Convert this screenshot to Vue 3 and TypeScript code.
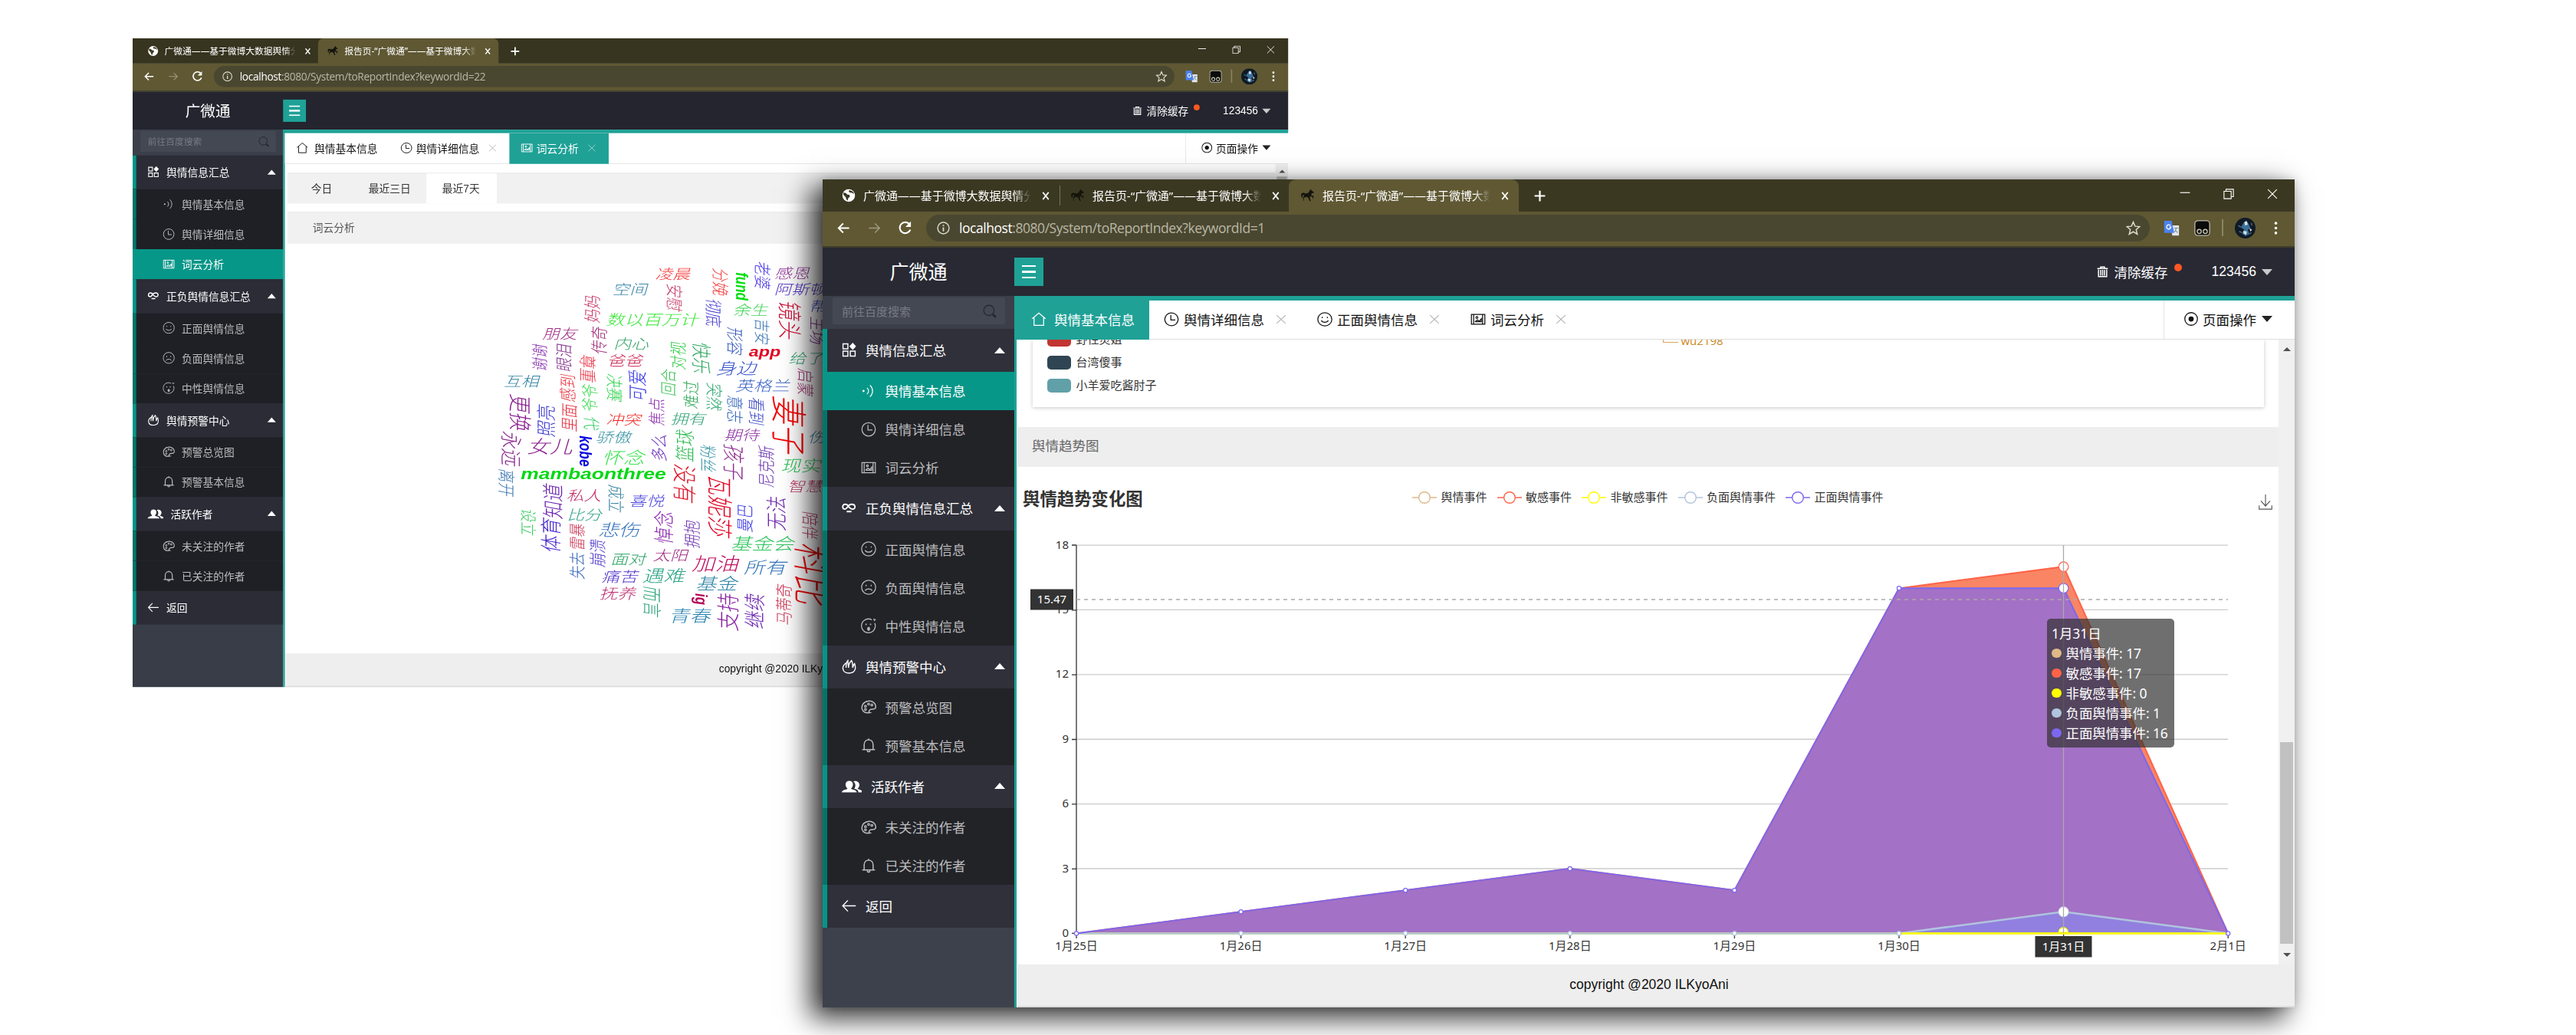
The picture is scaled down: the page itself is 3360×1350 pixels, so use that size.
<script setup lang="ts">
import { h, type FunctionalComponent } from 'vue'

const icons: Record<string, string> = {
  globe: '<circle cx="12" cy="12" r="11" fill="#fff" stroke="none"/><path d="M3 7c3 0 5 1 6 3 2 1 5 0 5 3s-3 2-3 5l-1 3c-3-2-2-5-4-7S2 12 3 7zM13 3c-2 2 0 4 3 4s3 2 5 2c0-3-4-6-8-6z" fill="#3b3822" stroke="none"/>',
  horse: '<path d="M0 10c2-3 4-3 6-2 3 1 5 0 7-1l3-5 1-1 1 2 4 3v2l-3-.5-1.500 4 4.500 1-1 5-1-.5v-3l-4-.5-1 1 2 7h-2l-3-6.500-5-.5-2 2-.5 5H4l-.5-6 2-4-.5-1-2 1-1 4H1z" fill="#15140d" stroke="none"/>',
  home: '<path d="M1.500 11L12 1.500 22.500 11M4.500 9v13h15V9"/>',
  clock: '<circle cx="12" cy="12" r="10.500"/><path d="M11 5v8h7"/>',
  image: '<path d="M5 4h14v16H5zM5 4H1.500v16H5M19 4h3.500v16H19"/><circle cx="10" cy="9" r="1.500"/><path d="M7 16l4-3 3 2 3-4v5H7"/>',
  smile: '<circle cx="12" cy="12" r="11"/><path d="M8 8v2M16 8v2M6.500 14c2 4 9 4 11 0"/>',
  sad: '<circle cx="12" cy="12" r="11"/><path d="M8 8v2.500M16 8v2.500M6.500 17.500c2-4 9-4 11 0"/>',
  wow: '<path d="M17 3A10.800 10.800 0 1 0 21.500 8M20 1l1 3 2-2"/><path d="M8 9v2M15 9v2" stroke-width="2"/><ellipse cx="12" cy="17" rx="1.500" ry="2.500" fill="currentColor"/>',
  signal: '<circle cx="4" cy="12" r="1.700" fill="currentColor" stroke="none"/><path d="M9.500 7c3 3 3 7 0 10M14 3c5.500 5 5.500 13 0 18"/>',
  apps: '<path d="M2 2h8v8H2zM2 14h8v8H2zM14 14h8v8h-8z" stroke-width="1.800"/><path d="M18 0l5.500 6L18 12l-5.500-6z" fill="currentColor" stroke="none"/>',
  link: '<path d="M12 11c-2-4-4-5-6.500-5A4 4 0 0 0 5.500 14C9 14 10 6 16 6c8 0 7 9 1 8-2 0-3-1-5-3M8 18h8" stroke-width="2.300"/>',
  fire: '<path d="M7 6C3 9 1 12 2 16c1 9 18 9 20 0 1-3 0-6-1-9-2 2-2 4-3 7 0-5 0-9-2-12-3 3-5 7-5 12 0-4-1-7-1-12C7 5 7 9 7 14" stroke-width="1.800"/>',
  palette: '<path d="M14 21c-3-1-1-4 1-5 3-1 7 1 8-3C24 6 17 2 11 3 4 4 0 10 2 16c2 5 7 6 12 5z" stroke-width="1.800"/><circle cx="7" cy="11" r="1.500"/><circle cx="12" cy="7.500" r="1.500"/><circle cx="17" cy="9" r="1.500"/><circle cx="7" cy="16" r="1.500"/>',
  bell: '<path d="M2 19h20M5 19v-8c0-10 14-10 14 0v8M10 20c0 3 4 3 4 0M12 3V1.500" stroke-width="1.800"/>',
  users: '<path d="M0 22c0-4 5-4 7-6-4-5-3-13 2-13s6 8 2 13c2 2 7 2 7 6z" fill="currentColor" stroke="none"/><path d="M14 4c6-3 10 6 5 12 2 2 6 2 6 6h-5c0-4-2-5-5-6 2-4 2-8-1-12z" fill="currentColor" stroke="none"/>',
  back: '<path d="M23 12H2M10 3l-8.500 9 8.500 9" stroke-width="1.800"/>',
  left: '<path d="M22 12H3M11 3.500L2.500 12l8.500 8.500" stroke-width="2.600"/>',
  right: '<path d="M2 12h19M13 3.500l8.500 8.500-8.500 8.500" stroke-width="2"/>',
  reload: '<path d="M20.500 15.500A9.500 9.500 0 1 1 19 6" stroke-width="2.800"/><path d="M21.500 1v9.500H12z" fill="currentColor" stroke="none"/>',
  info: '<circle cx="12" cy="12" r="10.500" stroke-width="2"/><path d="M12 10.500V18M12 6v2.500" stroke-width="2.500"/>',
  close: '<path d="M3 2l18 20M21 2L3 22" stroke-width="4"/>',
  thin: '<path d="M2 2l20 20M22 2L2 22" stroke-width="1.900"/>',
  plus: '<path d="M12 1v22M1 12h22" stroke-width="3.500"/>',
  star: '<path d="M12 2l3 7 7.500.6-5.700 5 1.800 7.400L12 18l-6.600 4 1.800-7.400-5.700-5L9 9z" stroke-width="1.900"/>',
  search: '<circle cx="10.500" cy="10.500" r="9"/><path d="M17.500 17.500l5 5" stroke-width="3"/>',
  trash: '<path d="M1 5h22M8 5V2h8v3M3.500 7v15h17V7M8 8v12M12 8v12M16 8v12" stroke-width="2.400"/>',
  radio: '<circle cx="12" cy="12" r="11" stroke-width="1.700"/><circle cx="12" cy="12" r="4.500" fill="currentColor" stroke="none"/>',
  translate: '<path d="M11 8h12v15H13z" fill="#e4e6ea" stroke="none"/><path d="M1 1h11l4 18H1z" fill="#4c82ee" stroke="none"/><path d="M10.500 8.500A3.200 3.200 0 1 0 11 10.500H8.500" stroke="#fff"/><path d="M16 12h6M19 11v1c0 3-2 5-3 6M17 14l4 5" stroke="#78909c" stroke-width="1.200"/>',
  monkey: '<rect x="1" y="1" width="22" height="22" rx="4.500" fill="#0b0b0b" stroke="#b9b8a9"/><circle cx="7.500" cy="17" r="3" stroke="#c9c6b0"/><circle cx="16.500" cy="17" r="3" stroke="#c9c6b0"/>',
  avatar: '<circle cx="12" cy="12" r="12" fill="#101a24" stroke="none"/><path d="M10 6l3-3 3 4 2 5-3 2 2 5-5 2-4-3 3-4-4-3z" fill="#3a6f98" stroke="none"/><path d="M11 5l3-1 1 4-3 1zM10 15l4 1-1 4-3-2zM17 12l3 2-2 2z" fill="#d7dfe2" stroke="none"/><path d="M4 9l3 2M19 6l1 3M5 16l3 1M17 19l2-2" stroke="#48708d" stroke-width="1.200"/>',
  dots: '<circle cx="12" cy="3" r="2.500" fill="#fff" stroke="none"/><circle cx="12" cy="12" r="2.500" fill="#fff" stroke="none"/><circle cx="12" cy="21" r="2.500" fill="#fff" stroke="none"/>',
  min: '<path d="M1 9h22" stroke-width="2"/>',
  restore: '<path d="M1.500 6h16v16.500h-16zM6 6V1.500h16.500V18H17.500" stroke-width="1.900"/>',
  download: '<path d="M12 0v18M4 10l8 8 8-8M1 17v6h22v-6" stroke-width="1.500"/>',
}

const Icon: FunctionalComponent<{ n: string; s?: number; w?: number }> = (p) =>
  h('svg', {
    width: p.w ?? p.s ?? 18, height: p.s ?? 18, viewBox: '0 0 24 24', fill: 'none',
    stroke: 'currentColor', 'stroke-width': 1.5, innerHTML: icons[p.n],
    preserveAspectRatio: 'none', style: 'flex:none;display:block',
  })
Icon.props = ['n', 's', 'w']

const menu = [
  { icon: 'apps', text: '舆情信息汇总', items: [['signal', '舆情基本信息'], ['clock', '舆情详细信息'], ['image', '词云分析']] },
  { icon: 'link', text: '正负舆情信息汇总', items: [['smile', '正面舆情信息'], ['sad', '负面舆情信息'], ['wow', '中性舆情信息']] },
  { icon: 'fire', text: '舆情预警中心', items: [['palette', '预警总览图'], ['bell', '预警基本信息']] },
  { icon: 'users', text: '活跃作者', items: [['palette', '未关注的作者'], ['bell', '已关注的作者']] },
  { icon: 'back', text: '返回', items: [] },
]

const first = '广微通——基于微博大数据舆情分'
const report = '报告页-“广微通”——基于微博大数'
const windows = [
  {
    id: 'cloud', url: ':8080/System/toReportIndex?keywordId=22', active: '词云分析',
    browserTabs: [first, report],
    tabs: [['home', '舆情基本信息'], ['clock', '舆情详细信息'], ['image', '词云分析']],
  },
  {
    id: 'trend', url: ':8080/System/toReportIndex?keywordId=1', active: '舆情基本信息',
    browserTabs: [first, report, report],
    tabs: [['home', '舆情基本信息'], ['clock', '舆情详细信息'], ['smile', '正面舆情信息'], ['image', '词云分析']],
  },
]

// text, centre x, centre y, size, colour, rotation
type Word = [string, number, number, number, string, number]
const words: Word[] = [
  ['凌晨', 748, 82, 54, '#f63b3b', 0], ['空间', 580, 142, 54, '#3a86a8', 0], ['老婆', 1092, 88, 54, '#4a3ae8', 90],
  ['分娩', 928, 114, 54, '#f23c3c', 90], ['感恩', 1215, 78, 54, '#8f2f93', 0], ['阿斯顿', 1248, 142, 54, '#5434c4', 0],
  ['安慰', 748, 175, 54, '#c63e68', 90], ['妈妈', 428, 217, 54, '#c83468', -90], ['数以百万计', 668, 262, 57, '#3be83b', 0],
  ['彻底', 900, 235, 54, '#4036d0', 90], ['余生', 1052, 224, 54, '#44d45a', 0], ['镜头', 1200, 265, 76, '#d01438', 90],
  ['帮助', 1350, 208, 54, '#3444c0', 0], ['主场', 1310, 305, 54, '#7c2c94', 90], ['吉安', 1092, 308, 50, '#3674b4', 90],
  ['形容', 985, 345, 54, '#3458bc', 90], ['朋友', 305, 317, 54, '#a22c84', 0], ['传奇', 455, 340, 54, '#a22c78', -90],
  ['内心', 585, 355, 54, '#34a468', 0], ['谢谢', 222, 408, 52, '#8a32b4', -90], ['眼泪', 318, 408, 54, '#82308c', -90],
  ['尊重', 410, 452, 54, '#ec3446', 90], ['爸爸', 560, 422, 54, '#cc2452', 0], ['对视', 765, 400, 54, '#30cc48', -90],
  ['快乐', 855, 412, 62, '#2ca85c', 90], ['给了', 1270, 412, 54, '#2ca270', 0], ['启蒙', 1260, 507, 54, '#a23674', 90],
  ['身边', 998, 450, 62, '#3452cc', 0], ['可爱', 605, 517, 61, '#3636e8', -90], ['互相', 155, 503, 54, '#3484a4', 0],
  ['感到', 332, 527, 54, '#e83440', -90], ['爷爷', 418, 567, 54, '#40dc54', -90], ['决赛', 513, 528, 54, '#34d450', 90],
  ['回合', 727, 505, 52, '#38c050', -90], ['难过', 815, 553, 54, '#30a858', -90], ['突然', 903, 563, 54, '#30a874', 90],
  ['英格兰', 1100, 520, 56, '#3c64c8', 0], ['意志', 985, 612, 54, '#3464bc', 90], ['看到', 1070, 620, 54, '#3c48c8', 90],
  ['妻子', 1195, 678, 114, '#f40808', 90], ['更换', 145, 627, 72, '#8a1c90', 90], ['照亮', 248, 655, 62, '#3c38d4', -90],
  ['里面', 338, 643, 54, '#e43040', -90], ['代', 425, 667, 54, '#34cc60', 90], ['焦点', 680, 620, 54, '#8c30b0', -90],
  ['冲突', 555, 653, 54, '#f02828', 0], ['拥有', 808, 650, 54, '#30a474', 0], ['骄傲', 515, 720, 54, '#3a94a4', 0],
  ['期待', 1018, 712, 54, '#8c30a4', 0], ['粉丝', 880, 805, 54, '#3494a4', 90], ['多么', 690, 760, 54, '#6a34bc', -90],
  ['篮球', 790, 753, 62, '#30bc54', -90], ['女儿', 268, 757, 70, '#8c2090', 0], ['永远', 108, 768, 68, '#8c2c90', 90],
  ['怀念', 555, 802, 65, '#3ce450', 0], ['孩子', 980, 820, 70, '#8c2c90', 90], ['尼克斯', 1110, 835, 54, '#6a34b0', -90],
  ['现实', 1250, 832, 62, '#2cc458', 0], ['伤害', 1345, 722, 54, '#3484a0', 0], ['智慧', 1265, 915, 54, '#bc3462', 0],
  ['离开', 92, 900, 54, '#3874b0', 90], ['没有', 788, 903, 75, '#e01428', 90], ['瓦妮莎', 925, 993, 81, '#e00824', 90],
  ['知道', 275, 970, 68, '#6a20b0', -90], ['体育', 268, 1103, 67, '#4424cc', -90], ['私人', 400, 950, 54, '#c02864', 0],
  ['成立', 520, 963, 54, '#3884a0', 90], ['喜悦', 645, 972, 54, '#4c44dc', 0], ['比分', 402, 1025, 54, '#30a484', 0],
  ['设立', 178, 1055, 52, '#38cc60', 90], ['雷暴', 368, 1110, 52, '#cc3454', -90], ['悲伤', 538, 1084, 64, '#3474bc', 0],
  ['悼念', 708, 1073, 64, '#8a24b0', -90], ['拥抱', 820, 1100, 54, '#6c34b0', -90], ['曼巴', 1025, 1037, 54, '#3838e4', -90],
  ['无法', 1150, 1017, 66, '#6a24b0', -90], ['基金会', 1100, 1138, 65, '#2cc45c', 0], ['陪伴', 1280, 1067, 54, '#b43662', 90],
  ['崩溃', 450, 1173, 54, '#4c34cc', -90], ['失去', 368, 1222, 52, '#3464bc', -90], ['面对', 573, 1200, 54, '#30a468', 0],
  ['太阳', 738, 1183, 54, '#a02c80', 0], ['加油', 915, 1215, 72, '#c01464', 0], ['所有', 1110, 1232, 65, '#3474bc', 0],
  ['痛苦', 540, 1267, 56, '#5434cc', 0], ['遇难', 712, 1265, 65, '#2ca484', 0], ['基金', 920, 1293, 64, '#2c84a4', 0],
  ['抚养', 532, 1332, 56, '#bc2c70', 0], ['而言', 660, 1365, 60, '#2ca478', 90], ['支持', 960, 1404, 72, '#8a24a4', -90],
  ['继续', 1065, 1400, 68, '#6a24b0', -90], ['马蒂奇', 1180, 1375, 54, '#d03454', -90], ['青春', 815, 1420, 64, '#2c84b0', 0],
  ['科比', 1285, 1263, 122, '#f01010', 90],
]
const latin: Word[] = [
  ['fund', 1008, 130, 51, '#00e010', 90], ['app', 1103, 390, 55, '#e00424', 0], ['kobe', 398, 775, 52, '#0808e0', 90],
  ['mambaonthree', 432, 868, 62.500, '#04d814', 0], ['ig', 848, 1355, 50, '#b00454', 90],
]
const place = (w: Word, slant = 0) => `translate(${w[1]} ${w[2]}) scale(1.27 1) rotate(${w[5]}) skewX(${slant})`

// trend chart
const days = ['1月25日', '1月26日', '1月27日', '1月28日', '1月29日', '1月30日', '1月31日', '2月1日']
const X = (i: number) => 331 + i * 214.600
const Y = (v: number) => 983.400 - v * 28.130
const line = (vals: number[]) => vals.map((v, i) => `${X(i)},${Y(v)}`).join(' ')
const area = (vals: number[]) => `${X(0)},${Y(0)} ${line(vals)} ${X(7)},${Y(0)}`
const total = [0, 1, 2, 3, 2, 16, 17, 0]
const positive = [0, 1, 2, 3, 2, 16, 16, 0]
const negative = [0, 0, 0, 0, 0, 0, 1, 0]
const none = [0, 0, 0, 0, 0, 0, 0, 0]
const series = [
  { name: '舆情事件', color: '#deb887', value: 17 },
  { name: '敏感事件', color: '#ff6347', value: 17 },
  { name: '非敏感事件', color: '#ffff00', value: 0 },
  { name: '负面舆情事件', color: '#b0c4de', value: 1 },
  { name: '正面舆情事件', color: '#7b68ee', value: 16 },
]
const authors = [['#c23531', '野性灵姐'], ['#2f4554', '台湾傻事'], ['#61a0a8', '小羊爱吃酱肘子']]
</script>

<template>
  <div class="desktop">
    <section v-for="w in windows" :key="w.id" class="win" :class="w.id">
      <div class="strip">
        <div v-for="(t, i) in w.browserTabs" :key="i" class="btab" :class="{ on: i === w.browserTabs.length - 1 }">
          <Icon :n="i ? 'horse' : 'globe'" :s="18" />
          <span class="btitle">{{ t }}</span>
          <Icon n="close" :s="11" :w="10" />
        </div>
        <Icon class="plus" n="plus" :s="15" />
        <div class="controls">
          <Icon n="min" :s="14" /><Icon n="restore" :s="14" /><Icon n="thin" :s="14" />
        </div>
      </div>
      <div class="toolbar">
        <Icon n="left" :s="17" /><Icon class="dim" n="right" :s="17" /><Icon n="reload" :s="18" />
        <div class="omni">
          <Icon n="info" :s="17" />
          <span class="url"><b>localhost</b>{{ w.url }}</span>
          <Icon n="star" :s="19" />
        </div>
        <Icon n="translate" :s="21" /><Icon n="monkey" :s="21" />
        <i class="sep"></i>
        <Icon n="avatar" :s="27" /><Icon class="dots" n="dots" :s="17" />
      </div>
      <header class="header">
        <h1>广微通</h1>
        <div class="burger"><i></i><i></i><i></i></div>
        <div class="clear"><Icon n="trash" :s="15" />清除缓存<i class="dot"></i></div>
        <div class="user">123456<i class="down"></i></div>
      </header>
      <div class="body">
        <nav class="side">
          <div class="searchrow">
            <div class="search"><span>前往百度搜索</span><Icon n="search" :s="18" /></div>
          </div>
          <template v-for="g in menu" :key="g.text">
            <div class="group">
              <Icon :n="g.icon" :s="19" :w="g.icon === 'users' ? 26 : 19" /><span>{{ g.text }}</span>
              <i v-if="g.items.length" class="up"></i>
            </div>
            <div v-for="it in g.items" :key="it[1]" class="item" :class="{ on: it[1] === w.active }">
              <Icon :n="it[0]" :s="20" :w="20" /><span>{{ it[1] }}</span>
            </div>
          </template>
        </nav>
        <main class="main">
          <div class="tabs">
            <div v-for="(t, i) in w.tabs" :key="t[1]" class="tab" :class="{ on: t[1] === w.active, homeTab: i === 0 }">
              <Icon :n="t[0]" :s="19" :w="20" /><span>{{ t[1] }}</span>
              <Icon v-if="i" class="x" n="thin" :s="13" :w="14" />
            </div>
            <div class="ops"><Icon n="radio" :s="18" />页面操作<i class="down dark"></i></div>
          </div>

          <div v-if="w.id === 'cloud'" class="content">
            <div class="ranges">
              <span>今日</span><span>最近三日</span><span class="on">最近7天</span>
            </div>
            <div class="cloudTitle">词云分析</div>
            <div class="cloudBox">
              <svg class="cloudSvg" viewBox="-775.500 -37 3878 1607" preserveAspectRatio="none">
                <text v-for="(t, i) in words" :key="i" class="word" :transform="place(t, -13)" :font-size="t[3]" :fill="t[4]" text-anchor="middle" :dy="t[3] * 0.36">{{ t[0] }}</text>
                <text v-for="(t, i) in latin" :key="t[0] + i" class="latin" :transform="place(t)" :font-size="t[3]" :fill="t[4]" text-anchor="middle" :dy="t[3] * 0.28">{{ t[0] }}</text>
              </svg>
            </div>
            <div class="bar"><i class="barUp"></i><div class="thumbTop"></div></div>
          </div>

          <div v-else class="content trendContent">
            <div class="page">
              <div class="card">
                <div v-for="a in authors" :key="a[1]" class="author"><i :style="{ background: a[0] }"></i>{{ a[1] }}</div>
                <div class="leader"><i></i>wu2198</div>
              </div>
              <div class="section">舆情趋势图</div>
              <div class="chart">
                <div class="chartHead">
                  <h2>舆情趋势变化图</h2>
                  <div class="legend">
                    <span v-for="s in series" :key="s.name">
                      <svg width="32" height="18" viewBox="0 0 32 18"><path d="M0 9h32" :stroke="s.color" stroke-width="1.500" /><circle cx="16" cy="9" r="7.300" fill="#fff" :stroke="s.color" stroke-width="1.400" /></svg>
                      {{ s.name }}
                    </span>
                  </div>
                  <Icon class="dl" n="download" :s="20" :w="18" />
                </div>
                <svg class="plot" width="1646" height="580" viewBox="253 444 1646 580">
                  <g stroke="#ccc" stroke-width="1.300">
                    <path v-for="v in [3, 6, 9, 12, 15, 18]" :key="v" :d="`M331 ${Y(v)}H1833`" />
                  </g>
                  <g class="axis" text-anchor="end">
                    <text v-for="v in [0, 3, 6, 9, 12, 15, 18]" :key="v" x="321" :y="Y(v) + 4.500">{{ v }}</text>
                  </g>
                  <path d="M331 477V984M325 477h6M325 561.800h6M325 646.100h6M325 730.500h6M325 814.900h6M325 899.300h6M325 983.400h1508" stroke="#333" stroke-width="1.300" />
                  <path v-for="(d, i) in days" :key="d" :d="`M${X(i)} 984v6`" stroke="#333" stroke-width="1.300" />
                  <polygon :points="area(total)" fill="#f98564" />
                  <polygon :points="area(positive)" fill="#a371c6" />
                  <polygon :points="area(negative)" fill="#9180df" />
                  <polyline :points="line(total)" fill="none" stroke="#ff6347" stroke-width="2" />
                  <polyline :points="line(none)" fill="none" stroke="#f5f500" stroke-width="2.500" />
                  <polyline :points="line(negative)" fill="none" stroke="#b0c4de" stroke-width="2.500" />
                  <path :d="`M${X(5)} ${Y(0)}H${X(7)}`" stroke="#fbfb10" stroke-width="2.200" />
                  <polyline :points="line(positive)" fill="none" stroke="#7b68ee" stroke-width="2" />
                  <path d="M331 548H1833" stroke="#aaa" stroke-width="1.300" stroke-dasharray="5 5" />
                  <g fill="#fff" stroke-width="1.200">
                    <circle v-for="i in [1, 2, 3, 4, 5]" :key="i" :cx="X(i)" :cy="Y(0)" r="2.600" stroke="#b0c4de" />
                    <circle v-for="i in [0, 1, 2, 3, 4, 5, 7]" :key="i" :cx="X(i)" :cy="Y(positive[i])" r="2.600" stroke="#7b68ee" />
                    <circle :cx="X(6)" :cy="Y(17)" r="6.300" stroke="#ff6347" />
                    <circle :cx="X(6)" :cy="Y(16)" r="6.300" stroke="#7b68ee" />
                    <circle :cx="X(6)" :cy="Y(1)" r="6.300" stroke="#dfe7f2" />
                    <path d="M1612 982a6.300 6.300 0 0 1 12.600 0z" stroke="#f5f500" />
                  </g>
                  <path d="M1618.500 477V983" stroke="#aaa" stroke-width="1.300" />
                  <g class="axis" text-anchor="middle">
                    <text v-for="(d, i) in days" :key="d" :x="X(i)" y="1005">{{ d }}</text>
                  </g>
                  <g class="axisLabel" text-anchor="middle">
                    <rect x="271" y="534.500" width="56" height="27" /><text x="299" y="553">15.47</text>
                    <rect x="1581.500" y="987" width="74" height="27.500" /><text x="1618.500" y="1005.500">1月31日</text>
                  </g>
                </svg>
                <div class="tip">
                  <div>1月31日</div>
                  <div v-for="s in series" :key="s.name"><i :style="{ background: s.color }"></i>{{ s.name }}: {{ s.value }}</div>
                </div>
              </div>
            </div>
            <div class="bar"><i class="barUp"></i><div class="thumb"></div><i class="barDown"></i></div>
          </div>
          <footer>copyright @2020 ILKyoAni</footer>
        </main>
      </div>
    </section>
  </div>
</template>

<style>
html, body { background: #fff; overflow: hidden; }
</style>

<style scoped>
.desktop { position: relative; width: 3360px; height: 1350px; overflow: hidden; background: #fff; font-family: "Liberation Sans", "Noto Sans CJK SC", sans-serif; font-size: 17.5px; }
.desktop * { box-sizing: border-box; }
.win { position: absolute; width: 1920px; height: 1080px; display: flex; flex-direction: column; background: #fff; }
.cloud { left: 173px; top: 50px; transform: scale(0.785, 0.7835); transform-origin: 0 0; }
.trend { left: 1073px; top: 234px; box-shadow: -14px 12px 34px 2px rgba(0, 0, 0, 0.8), 0 0 12px rgba(0, 0, 0, 0.15); }
i { display: block; flex: none; }

.strip { height: 42px; flex: none; display: flex; background: #3b3822; color: #fff; align-items: stretch; }
.cloud .strip { background: #37341f; }
.btab { width: 299px; height: 42px; display: flex; align-items: center; padding: 0 13px 0 25px; font: 15px/20px "Noto Sans", "Noto Sans CJK SC", sans-serif; position: relative; }
.btab + .btab { border-left: 1px solid #77745f; border-image: linear-gradient(transparent 20%, #77745f 20%, #77745f 80%, transparent 80%) 1; padding-left: 26px; }
.btab.on, .btab + .btab.on { background: #5f5833; border: 0; border-radius: 9px 9px 0 0; margin-left: -1px; width: 300px; padding-left: 16px; }
.btab:first-child { width: 309px; }
.trend .btab:nth-child(2) { width: 300px; padding-left: 14px; }
.btitle { flex: 1; white-space: nowrap; overflow: hidden; margin: 0 14px 0 10px; letter-spacing: -0.05px; -webkit-mask-image: linear-gradient(90deg, #000 90%, transparent); mask-image: linear-gradient(90deg, #000 90%, transparent); }
.plus { align-self: center; margin-left: 20px; }
.controls { margin-left: auto; display: flex; align-items: center; gap: 43px; padding-right: 22px; margin-top: -4px; }
.toolbar { height: 47px; flex: none; display: flex; align-items: center; background: #5f5833; border-bottom: 2px solid #3f3d2c; padding: 0 17px 3px 19px; color: #fff; gap: 23px; }
.toolbar .dim { color: #a09b80; }
.toolbar .dots { margin-left: -5px; }
.omni { width: 1596px; height: 35px; flex: none; border-radius: 18px; background: #4a4730; margin-left: -5px; margin-right: -5px; display: flex; align-items: center; padding: 0 12px 0 14px; color: #dcdacb; }
.url { flex: 1; margin-left: 12px; color: #b9b7a5; font: 17.5px/24px "Open Sans", sans-serif; letter-spacing: -0.450px; }
.url b { font-weight: 400; color: #fff; }
.sep { width: 2px; height: 22px; background: #8a8562; margin: 0 -8px; }
.toolbar > svg:nth-last-child(4) { margin-left: -4px; }

.header { height: 63px; flex: none; background: #282933; color: #fff; display: flex; align-items: center; }
.cloud .header { background: #24252f; }
h1 { width: 250px; margin: 0; text-align: center; font-weight: 400; font-size: 25px; line-height: 30px; }
.burger { width: 38px; height: 37px; background: #1fa196; display: flex; flex-direction: column; gap: 5px; align-items: center; justify-content: center; }
.burger i { width: 18px; height: 2.5px; background: #fff; }
.clear { margin-left: auto; display: flex; align-items: center; gap: 8px; }
.dot { width: 10px; height: 10px; border-radius: 50%; background: #ff5722; margin-top: -11px; }
.user { display: flex; align-items: center; margin: 0 29px 0 39px; }
.down { border: 7.5px solid transparent; border-top: 8px solid #c9c9cd; border-bottom: 0; margin-left: 7px; }
.down.dark { border-top-color: #222; }

.body { flex: 1; display: flex; min-height: 0; }
.side { width: 250px; flex: none; background: #3d414c; color: #fff; }
.cloud .side { background: #393d48; }
.searchrow { height: 43px; padding: 2px 12px 0 13px; background: #3b3f4a; }
.search { height: 35px; background: #444853; display: flex; align-items: center; justify-content: space-between; padding: 0 11px 0 12px; font-size: 15px; color: #777b84; border-radius: 2px; }
.search svg { color: #22242c; }
.group { height: 56.250px; background: #2f303a; border-left: 6px solid #009688; display: flex; align-items: center; padding: 0 12px 1px 19px; gap: 12px; }
.cloud .group { background: #2b2c36; }
.up { border: 7.5px solid transparent; border-bottom: 8px solid #fff; border-top: 0; margin-left: auto; }
.item { height: 50px; background: #222327; border-left: 6px solid #00756a; display: flex; align-items: center; padding: 0 0 1px 44px; gap: 11.500px; color: #bcbcbf; }
.cloud .item { background: #1f2025; }
.cloud .item.on, .item.on { background: #079788; border-color: #079788; color: #fff; }

.main { flex: 1; display: flex; flex-direction: column; border-left: 3px solid #1fa196; border-top: 6px solid #1fa196; min-width: 0; }
.tabs { height: 51px; flex: none; display: flex; border-bottom: 1px solid #dfdfdf; background: #fff; }
.tab { height: 51px; display: flex; align-items: center; gap: 6px; padding: 0 21px 2px 19px; color: #111; }
.tab.homeTab { gap: 10px; padding-right: 19px; }
.tab .x { margin-left: 9px; color: #b4b4b4; }
.tab.on { background: #1fa196; color: #fff; }
.tab.on .x { color: #a8d8d4; }
.ops { margin-left: auto; width: 171px; border-left: 1px solid #e4e4e4; display: flex; align-items: center; padding: 0 0 2px 26px; color: #111; }
.ops svg { margin-right: 6px; }
.content { flex: 1; min-height: 0; display: flex; flex-direction: column; overflow: hidden; position: relative; }
footer { height: 56px; flex: none; background: #eee; border-bottom: 2px solid #ddd; text-align: center; line-height: 53px; color: #111; margin-left: 1px; padding-right: 18px; font-size: 17.5px; }

.ranges { height: 51px; margin: 15px 21px 0 4px; background: #f1f1f1; border-top: 1px solid #e6e6e6; display: flex; flex: none; }
.ranges span { width: 120px; line-height: 50px; text-align: center; color: #333; padding-right: 2px; }
.ranges span:first-child { width: 111px; padding: 0 0 0 3px; }
.ranges .on { width: 117px; background: #fff; }
.cloudTitle { height: 53px; margin: 14px 21px 0 4px; background: #f1f1f1; border-top: 1px solid #e8e8e8; line-height: 51px; padding-left: 42px; color: #555; flex: none; }
.cloudBox { flex: 1; display: flex; min-height: 0; }
.cloudSvg { width: 1646px; flex: none; height: 683px; display: block; }
.word { font-family: "Noto Sans CJK SC", sans-serif; font-weight: 300; }
.latin { font-family: "Liberation Sans", sans-serif; font-weight: 700; font-style: italic; }
.bar { width: 21px; flex: none; background: #f0f0f0; display: flex; flex-direction: column; align-items: center; }
.cloud .bar { position: absolute; right: 0; top: 0; bottom: 0; }
.barUp { border: 5px solid transparent; border-bottom: 5px solid #505050; border-top: 0; margin-top: 10px; }
.barDown { border: 5px solid transparent; border-top: 5px solid #505050; border-bottom: 0; margin-top: 12px; }
.thumbTop { width: 17px; height: 600px; background: #c1c1c1; margin-top: 6px; }
.thumb { width: 17px; height: 263px; background: #c1c1c1; margin-top: 510px; }

.trendContent { flex-direction: row; }
.page { flex: 1; min-width: 0; }
.card { height: 88px; margin: 0 19px 0 20.500px; box-shadow: 0 1px 5px rgba(0, 0, 0, 0.22); display: flex; flex-direction: column; justify-content: flex-end; padding: 0 0 13px 19px; position: relative; }
.author { height: 30px; flex: none; display: flex; align-items: center; gap: 7px; font-size: 15px; color: #333; line-height: 20px; }
.author i { width: 31px; height: 18px; border-radius: 5px; }
.leader { position: absolute; left: 822px; top: -10px; display: flex; color: #ca8622; font: 15px/22px "Open Sans", sans-serif; gap: 4px; }
.leader i { width: 20px; height: 14px; border-left: 1.500px solid #d8a75c; border-bottom: 1.500px solid #d8a75c; }
.section { margin-top: 26px; height: 52px; background: #eee; line-height: 51px; padding-left: 19px; color: #666; margin-left: 1px; }
.chart { position: relative; }
.chartHead { height: 69px; display: flex; padding: 28px 8px 0; align-items: flex-start; }
h2 { margin: 0; width: 508px; font-size: 22.400px; line-height: 30px; color: #333; font-weight: 700; }
.legend { display: flex; gap: 13px; font-size: 15px; line-height: 24px; color: #333; flex: 1; }
.legend span { display: flex; align-items: center; gap: 5.500px; height: 24px; white-space: nowrap; }
.dl { margin-top: 8px; color: #555; }
.plot { display: block; }
.axis, .axisLabel { font: 15px "Noto Sans", "Noto Sans CJK SC", sans-serif; fill: #333; }
.axisLabel rect { fill: #333; }
.axisLabel text { fill: #fff; }
.tip { position: absolute; left: 1344px; top: 198px; width: 166px; height: 168px; border-radius: 5px; background: rgba(50, 50, 50, 0.7); color: #fff; padding: 6px; font: 17.5px/26px "Noto Sans", "Noto Sans CJK SC", sans-serif; white-space: nowrap; letter-spacing: -0.1px; }
.tip div { display: flex; align-items: center; height: 26px; }
.tip i { width: 12.500px; height: 12.500px; border-radius: 50%; margin-right: 6px; }
</style>
